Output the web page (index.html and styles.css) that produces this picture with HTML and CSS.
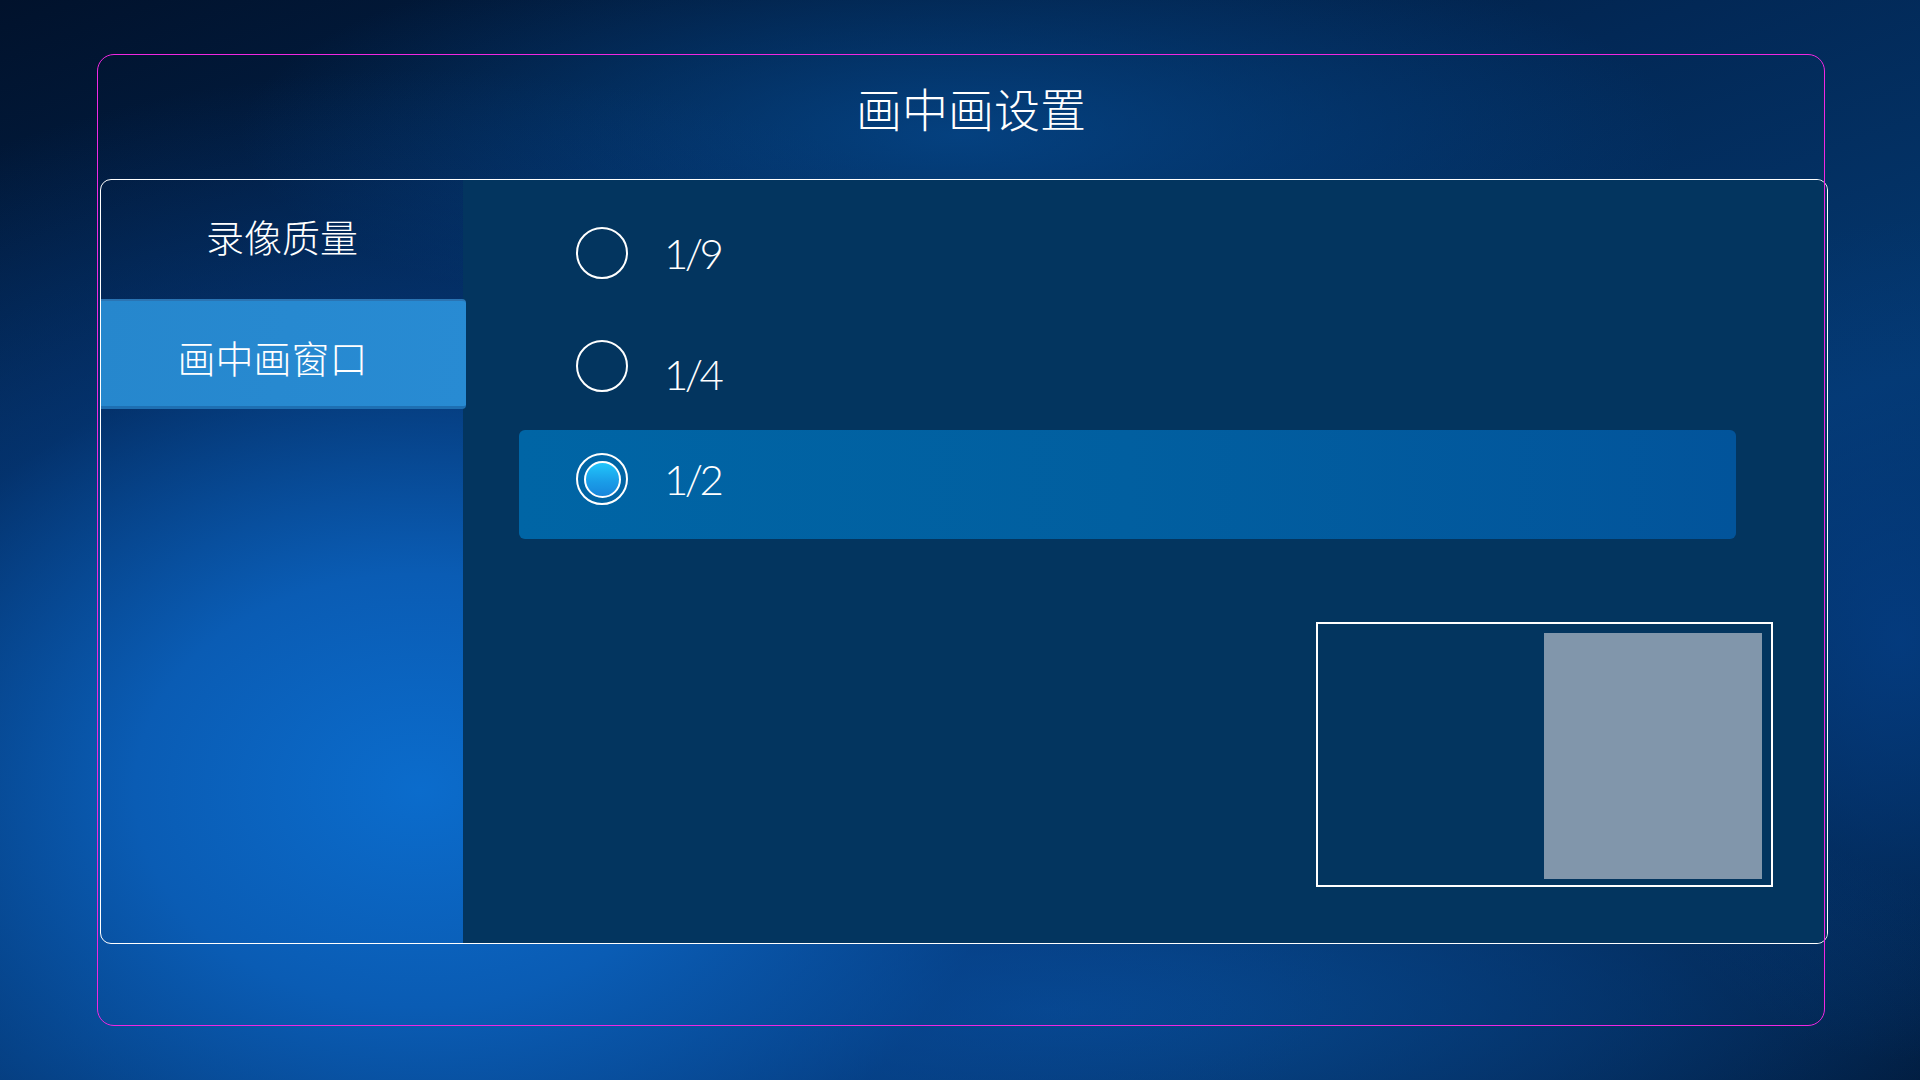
FILE: index.html
```html
<!DOCTYPE html>
<html lang="zh-CN">
<head>
<meta charset="utf-8">
<title>画中画设置</title>
<link rel="stylesheet" href="styles.css">
</head>
<body>
<div class="frame">
  <div class="title-bar"><h1 class="title">画中画设置</h1></div>
  <div class="panel">
    <nav class="sidebar">
      <div class="side-item side-item--first">录像质量</div>
      <div class="side-item side-item--active">画中画窗口</div>
    </nav>
    <main class="content">
      <div class="options">
        <div class="option">
          <span class="radio"></span>
          <span class="option-label">1/9</span>
        </div>
        <div class="option">
          <span class="radio"></span>
          <span class="option-label option-label--low">1/4</span>
        </div>
        <div class="option option--selected">
          <span class="radio radio--checked"><span class="radio-dot"></span></span>
          <span class="option-label">1/2</span>
        </div>
      </div>
      <div class="preview">
        <div class="preview-pip"></div>
      </div>
    </main>
  </div>
</div>
</body>
</html>
```

FILE: styles.css
```css
* { box-sizing: border-box; }

html, body {
  margin: 0;
  padding: 0;
  width: 1920px;
  height: 1080px;
  overflow: hidden;
}

body {
  font-family: "Noto Sans CJK SC", "Noto Sans", sans-serif;
  color: #ffffff;
  background:
    radial-gradient(ellipse 950px 720px at 420px 790px, #0b6ccc 0%, #0a5cb4 30%, rgba(6, 66, 142, 0.5) 62%, rgba(3, 40, 90, 0) 100%),
    radial-gradient(ellipse 1000px 260px at 1050px 1010px, rgba(8, 80, 158, 0.85) 0%, rgba(7, 70, 143, 0.5) 55%, rgba(6, 60, 130, 0) 100%),
    radial-gradient(ellipse 720px 210px at 960px 135px, rgba(5, 72, 140, 0.8) 0%, rgba(4, 60, 120, 0) 100%),
    radial-gradient(ellipse 320px 420px at 1900px 640px, rgba(4, 62, 134, 0.8) 0%, rgba(4, 60, 130, 0) 100%),
    linear-gradient(160deg, #01122c 0%, #022856 35%, #04386f 60%, #011a3a 100%);
  padding-top: 54px;
}

.frame {
  position: relative;
  margin-left: 97px;
  width: 1728px;
  height: 972px;
  display: flex;
  flex-direction: column;
}

.frame::after {
  content: "";
  position: absolute;
  inset: 0;
  border: 1px solid #f127e1;
  border-radius: 17px;
  pointer-events: none;
  z-index: 5;
}

.title-bar {
  height: 125px;
  display: flex;
  align-items: center;
  justify-content: center;
  padding-bottom: 20px;
  padding-left: 20px;
}

.title {
  margin: 0;
  font-size: 46px;
  line-height: 60px;
  font-weight: 300;
  letter-spacing: 0;
}

.panel {
  margin-left: 3px;
  width: 1728px;
  height: 765px;
  border: 1px solid #ffffff;
  border-radius: 11px;
  overflow: hidden;
  display: flex;
}

.sidebar {
  width: 362px;
  flex: none;
  display: flex;
  flex-direction: column;
}

.side-item {
  height: 119px;
  display: flex;
  align-items: center;
  justify-content: center;
  font-size: 38px;
  font-weight: 300;
  line-height: 50px;
}

.side-item--first {
  padding-bottom: 8px;
}

.side-item--active {
  position: relative;
  z-index: 1;
  width: calc(100% + 3px);
  height: 110px;
  background: linear-gradient(100deg, #2687cd 0%, #288bd3 100%);
  border-top: 2px solid #2a74b3;
  border-bottom: 3px solid #1e6fb2;
  border-radius: 0 4px 4px 0;
  padding-top: 6px;
  padding-right: 22px;
}

.content {
  flex: 1;
  background: #03355f;
  display: flex;
  flex-direction: column;
  padding: 24px 0 0 56px;
}

.options {
  width: 1217px;
  display: flex;
  flex-direction: column;
  gap: 4px;
}

.option {
  height: 109px;
  display: flex;
  align-items: flex-start;
  padding: 23px 0 0 57px;
  border-radius: 6px;
}

.option--selected {
  background: linear-gradient(90deg, #0065a5 0%, #015fa0 50%, #02549b 100%);
}

.radio {
  width: 52px;
  height: 52px;
  flex: none;
  border: 2px solid #ffffff;
  border-radius: 50%;
  display: flex;
  align-items: center;
  justify-content: center;
}

.radio-dot {
  width: 37px;
  height: 37px;
  border-radius: 50%;
  border: 2px solid #ffffff;
  background: linear-gradient(180deg, #22c6fb 0%, #1a9ee8 55%, #1786dc 100%);
}

.option-label {
  margin-left: 36px;
  font-family: "Lato", "Noto Sans", sans-serif;
  font-weight: 300;
  font-size: 42px;
  line-height: 52px;
  letter-spacing: -3.5px;
}

.option-label--low {
  margin-top: 8px;
}

.preview {
  align-self: flex-end;
  margin-top: 83px;
  margin-right: 54px;
  width: 457px;
  height: 265px;
  border: 2px solid #ffffff;
  display: flex;
  justify-content: flex-end;
  padding: 9px 9px 6px 0;
}

.preview-pip {
  width: 218px;
  height: 100%;
  background: #8196ab;
}
```
